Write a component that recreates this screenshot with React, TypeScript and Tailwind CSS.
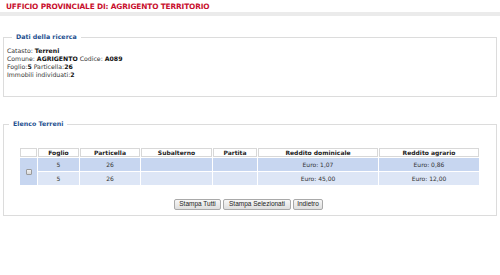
const rows = [
  { foglio: '5', particella: '26', dominicale: 'Euro: 1,07', agrario: 'Euro: 0,86', bg: 'bg-[#c7d6f0]' },
  { foglio: '5', particella: '26', dominicale: 'Euro: 45,00', agrario: 'Euro: 12,00', bg: 'bg-[#dde6f6]' },
];

const headers = ['Foglio', 'Particella', 'Subalterno', 'Partita', 'Reddito dominicale', 'Reddito agrario'];

function Button({ label, width }: { label: string; width: string }) {
  return (
    <button
      className={`${width} h-[11px] border border-[#a9a9a9] rounded-[2px] bg-gradient-to-b from-[#f7f7f7] to-[#dedede] text-[6.5px] leading-none text-[#222] font-['Liberation_Sans',Arial,sans-serif]`}
    >
      {label}
    </button>
  );
}

export default function App() {
  return (
    <div className="w-[500px] h-[275px] bg-white overflow-hidden font-['DejaVu_Sans',Verdana,sans-serif] text-[#333]">
      <div className="pl-[6px] pt-[3px] h-[12px] text-[7.4px] leading-[8px] font-bold text-[#c8102e] tracking-[-0.15px]">
        UFFICIO PROVINCIALE DI: AGRIGENTO TERRITORIO
      </div>
      <div className="h-[4px] bg-[#ebebeb]" />

      <fieldset className="mx-[3px] mt-[17px] h-[64px] border border-[#dcdcdc] px-[3px]">
        <legend className="ml-[5px] px-[4px] text-[6.3px] leading-[8px] font-bold text-[#1d4f8f]">
          Dati della ricerca
        </legend>
        <div className="pt-[6px] text-[6.2px] leading-[8px]">
          <div>
            Catasto: <b className="text-[#111]">Terreni</b>
          </div>
          <div>
            Comune: <b className="text-[#111]">AGRIGENTO</b> Codice: <b className="text-[#111]">A089</b>
          </div>
          <div>
            Foglio:<b className="text-[#111]">5</b> Particella:<b className="text-[#111]">26</b>
          </div>
          <div>
            Immobili individuati:<b className="text-[#111]">2</b>
          </div>
        </div>
      </fieldset>

      <fieldset className="mx-[3px] mt-[23px] h-[96px] border border-[#dcdcdc] px-0">
        <legend className="ml-[5px] px-[4px] text-[6.3px] leading-[8px] font-bold text-[#1d4f8f]">
          Elenco Terreni
        </legend>
        <div className="mt-[20px] ml-[16px] grid grid-cols-[17px_41px_60px_71px_44px_120px_100px] grid-rows-[9px_13px_13px] gap-[1px] text-[6px] text-center">
          <div className="bg-white border border-[#d8d8d8]" />
          {headers.map((h) => (
            <div
              key={h}
              className="flex items-center justify-center bg-white border border-[#d8d8d8] font-bold text-[#222]"
            >
              {h}
            </div>
          ))}
          <div className="row-span-2 flex items-center justify-center bg-[#c7d6f0]">
            <span className="w-[6px] h-[6px] border border-[#9a9a9a] rounded-[1px] bg-gradient-to-b from-[#f2f2f2] to-[#d8d8d8]" />
          </div>
          {rows.map((r, i) => (
            <div key={i} className="contents">
              <div className={`${r.bg} flex items-center justify-center`}>{r.foglio}</div>
              <div className={`${r.bg} flex items-center justify-center`}>{r.particella}</div>
              <div className={r.bg} />
              <div className={r.bg} />
              <div className={`${r.bg} flex items-center justify-center`}>{r.dominicale}</div>
              <div className={`${r.bg} flex items-center justify-center`}>{r.agrario}</div>
            </div>
          ))}
        </div>
        <div className="mt-[14px] flex justify-center gap-[2px] pr-[3px]">
          <Button label="Stampa Tutti" width="w-[47px]" />
          <Button label="Stampa Selezionati" width="w-[68px]" />
          <Button label="Indietro" width="w-[30px]" />
        </div>
      </fieldset>
    </div>
  );
}
